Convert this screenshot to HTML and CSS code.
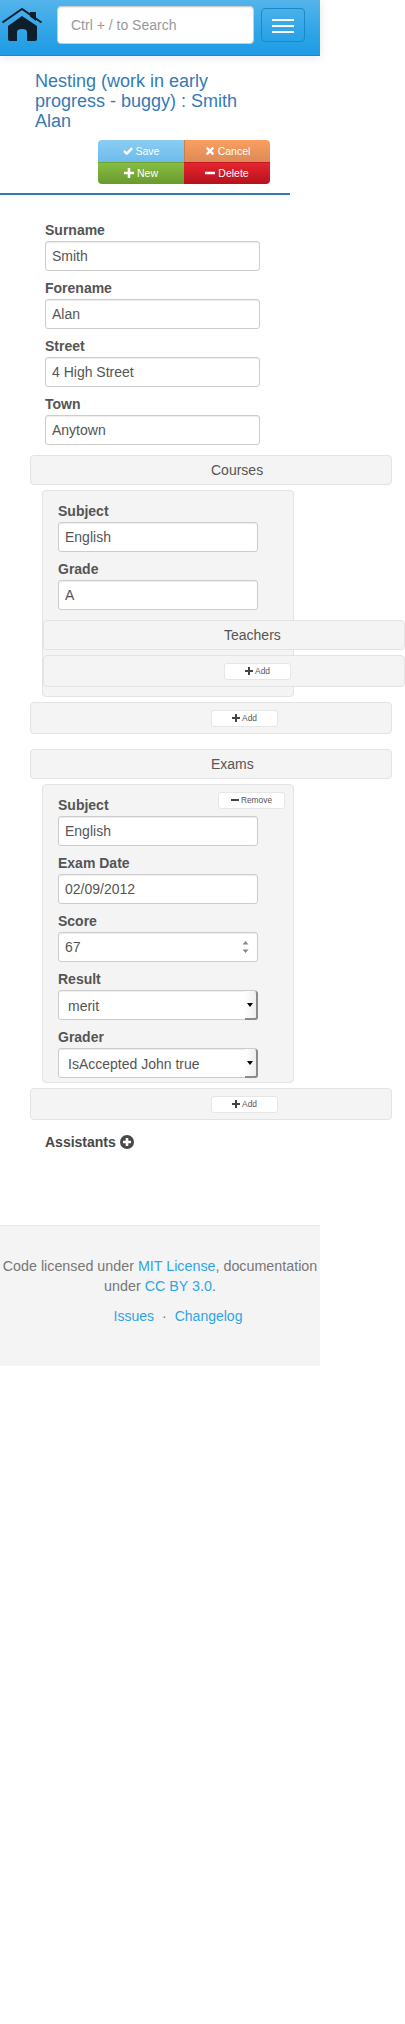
FILE: index.html
```html
<!DOCTYPE html>
<html lang="en">
<head>
<meta charset="UTF-8">
<meta name="viewport" content="width=device-width, initial-scale=1.0">
<title>Nesting</title>
<link rel="stylesheet" href="styles.css">
</head>
<body>

<svg class="icon-defs" width="0" height="0">
  <symbol id="i-plus" viewBox="0 0 12 12"><path d="M4.500 0h3v4.500H12v3H7.500V12h-3V7.500H0v-3h4.500z"/></symbol>
  <symbol id="i-minus" viewBox="0 0 12 12"><path d="M0 4.500h12v3H0z"/></symbol>
  <symbol id="i-ok" viewBox="0 0 12 12"><path d="M0 6.800l2-2 2.500 2.500L10 1.500l2 2-7.500 7.500z"/></symbol>
  <symbol id="i-remove" viewBox="0 0 12 12"><path d="M3 1l3 3 3-3 2 2-3 3 3 3-2 2-3-3-3 3-2-2 3-3-3-3z"/></symbol>
</svg>

<header class="navbar">
  <a class="brand" href="#">
    <svg viewBox="0 0 44 36" width="44" height="36">
      <path class="roof" d="M2.500 15.500L22 2l19.500 13.500" />
      <path d="M30 5h6v9l-6-4.500z"/>
      <path d="M8 19L22 9l15 10v13q0 2-2 2h-8V25q0-3-5-3t-5 3v9H10q-2 0-2-2z"/>
    </svg>
  </a>
  <input class="search" type="text" placeholder="Ctrl + / to Search">
  <button class="toggle" type="button"><span></span><span></span><span></span></button>
</header>

<main class="page">
  <h1 class="title">Nesting (work in early progress - buggy) : Smith Alan</h1>
  <div class="actions">
    <a class="act act-save" href="#"><svg class="ico"><use href="#i-ok"/></svg>Save</a>
    <a class="act act-cancel" href="#"><svg class="ico"><use href="#i-remove"/></svg>Cancel</a>
    <a class="act act-new" href="#"><svg class="ico"><use href="#i-plus"/></svg>New</a>
    <a class="act act-delete" href="#"><svg class="ico"><use href="#i-minus"/></svg>Delete</a>
  </div>
  <hr class="rule">

  <form class="main-form">
    <div class="field"><label>Surname</label><input type="text" value="Smith"></div>
    <div class="field"><label>Forename</label><input type="text" value="Alan"></div>
    <div class="field"><label>Street</label><input type="text" value="4 High Street"></div>
    <div class="field"><label>Town</label><input type="text" value="Anytown"></div>

    <div class="bar bar-title">Courses</div>
    <div class="item">
      <div class="field"><label>Subject</label><input type="text" value="English"></div>
      <div class="field"><label>Grade</label><input type="text" value="A"></div>
      <div class="bar bar-title bar-nested">Teachers</div>
      <div class="bar bar-add bar-nested"><a class="mini" href="#"><svg class="ico"><use href="#i-plus"/></svg>Add</a></div>
    </div>
    <div class="bar bar-add"><a class="mini" href="#"><svg class="ico"><use href="#i-plus"/></svg>Add</a></div>

    <div class="bar bar-title bar-exams">Exams</div>
    <div class="item item-exam">
      <a class="mini mini-remove" href="#"><svg class="ico"><use href="#i-minus"/></svg>Remove</a>
      <div class="field"><label>Subject</label><input type="text" value="English"></div>
      <div class="field"><label>Exam Date</label><input type="text" value="02/09/2012"></div>
      <div class="field">
        <label>Score</label>
        <div class="control">
          <input class="number" type="number" value="67">
          <svg class="spin" width="7" height="12" viewBox="0 0 7 12"><path d="M3.500 0L6.500 3.500H.5zM.5 8.500h6L3.500 12z"/></svg>
        </div>
      </div>
      <div class="field">
        <label>Result</label>
        <div class="control">
          <select><option>merit</option></select>
          <span class="caret-box"></span>
        </div>
      </div>
      <div class="field">
        <label>Grader</label>
        <div class="control">
          <select><option>IsAccepted John true</option></select>
          <span class="caret-box"></span>
        </div>
      </div>
    </div>
    <div class="bar bar-add"><a class="mini" href="#"><svg class="ico"><use href="#i-plus"/></svg>Add</a></div>

    <div class="assistants">
      Assistants
      <svg width="14" height="14" viewBox="0 0 14 14"><circle cx="7" cy="7" r="7"/><path class="cross" d="M5.700 3h2.600v2.700H11v2.600H8.300V11H5.700V8.300H3V5.700h2.700z"/></svg>
    </div>
  </form>
</main>

<footer class="footer">
  <p class="license">Code licensed under <a href="#">MIT License</a>, documentation under <a href="#">CC BY 3.0</a>.</p>
  <p class="links"><a href="#">Issues</a><span class="dot">·</span><a href="#">Changelog</a></p>
</footer>

</body>
</html>
```

FILE: styles.css
```css
body {
  margin: 0;
  background: #fff;
  color: #555;
  font-family: "Liberation Sans", Arial, sans-serif;
  font-size: 14px;
  line-height: 20px;
}
a {
  text-decoration: none;
}
.icon-defs {
  display: block;
}
.ico {
  width: 10px;
  height: 10px;
  fill: currentColor;
  margin-right: 4px;
  vertical-align: -1px;
}

/* top bar */
.navbar {
  width: 320px;
  height: 56px;
  box-sizing: border-box;
  display: flex;
  align-items: flex-start;
  background: linear-gradient(#54b4eb, #2fa4e7 60%, #1d9ce5);
  border-bottom: 1px solid #178acc;
  box-shadow: 0 1px 10px rgba(0, 0, 0, 0.1);
}
.brand {
  width: 44px;
  height: 36px;
  margin: 7px 13px 0 0;
  fill: #0d1f2d;
}
.brand .roof {
  fill: none;
  stroke: #0d1f2d;
  stroke-width: 2;
}
.search {
  width: 197px;
  height: 38px;
  box-sizing: border-box;
  margin-top: 6px;
  padding: 0 13px;
  border: 1px solid #ccc;
  border-radius: 4px;
  font: 14px "Liberation Sans", Arial, sans-serif;
  box-shadow: inset 0 1px 1px rgba(0, 0, 0, 0.075);
}
.search::placeholder {
  color: #999;
  opacity: 1;
}
.toggle {
  width: 44px;
  height: 34px;
  box-sizing: border-box;
  margin: 8px 0 0 7px;
  padding: 2px 0 0;
  display: flex;
  flex-direction: column;
  align-items: center;
  justify-content: center;
  gap: 4px;
  background: transparent;
  border: 1px solid #178acc;
  border-radius: 4px;
}
.toggle span {
  width: 22px;
  height: 2px;
  background: #fff;
}

/* heading and action buttons */
.page {
  width: 405px;
}
.title {
  width: 236px;
  margin: 15px 0 0 35px;
  color: #337ab7;
  font-size: 18px;
  font-weight: 400;
  line-height: 20px;
}
.actions {
  width: 172px;
  margin: 9px 0 0 98px;
  display: grid;
  grid-template-columns: 86px 86px;
  border-radius: 4px;
  overflow: hidden;
}
.act {
  display: block;
  height: 22px;
  text-align: center;
  color: #fff;
  font-size: 10.5px;
  line-height: 23px;
}
.act .ico {
  margin-right: 3px;
}
.act-save {
  background: linear-gradient(#8acdf3, #6cbcec);
}
.act-cancel {
  background: linear-gradient(#fb9f5f, #dc8a58);
  border-left: 1px solid #c9804f;
}
.act-new {
  box-sizing: border-box;
  background: linear-gradient(#87bd43, #689a2e);
  border-top: 1px solid #6fa335;
  line-height: 20px;
}
.act-delete {
  box-sizing: border-box;
  background: linear-gradient(#e6252f, #b5121b);
  border-top: 1px solid #c2181f;
  line-height: 20px;
}
.rule {
  width: 290px;
  height: 2px;
  margin: 9px 0 0;
  border: 0;
  background: #337ab7;
}

/* form */
.main-form {
  padding-top: 26px;
}
.field {
  width: 215px;
  margin: 0 0 8px 45px;
}
.field label {
  display: block;
  height: 20px;
  font-weight: 700;
  line-height: 18px;
}
.field input,
.field select {
  display: block;
  width: 100%;
  height: 30px;
  box-sizing: border-box;
  padding: 0 6px;
  background: #fff;
  color: #555;
  border: 1px solid #ccc;
  border-radius: 3px;
  font: 14px "Liberation Sans", Arial, sans-serif;
  box-shadow: inset 0 1px 1px rgba(0, 0, 0, 0.075);
}
.field select {
  appearance: none;
  padding: 1px 0 0 9px;
}
.field .number {
  appearance: textfield;
}
.control {
  position: relative;
}
.spin {
  position: absolute;
  top: 9px;
  right: 9px;
  fill: #888;
}
.caret-box {
  position: absolute;
  top: 1px;
  right: 0;
  width: 13px;
  height: 29px;
  box-sizing: border-box;
  background: linear-gradient(90deg, #fff, #eee);
  border-right: 2px solid #8a8a8a;
  border-bottom: 2px solid #8a8a8a;
  border-radius: 0 3px 3px 0;
}
.caret-box::after {
  content: "";
  position: absolute;
  top: 12px;
  left: 2px;
  border-left: 3px solid transparent;
  border-right: 3px solid transparent;
  border-top: 4px solid #000;
}
.bar {
  width: 362px;
  box-sizing: border-box;
  margin-left: 30px;
  padding-left: 180px;
  background: #f4f4f4;
  border: 1px solid #e3e3e3;
  border-radius: 4px;
}
.bar-title {
  height: 30px;
  margin-top: 10px;
  line-height: 28px;
}
.bar-add {
  height: 32px;
  margin-top: 5px;
  padding-top: 7px;
}
.bar-exams {
  margin-top: 15px;
}
.item {
  position: relative;
  width: 252px;
  box-sizing: border-box;
  margin: 5px 0 0 42px;
  padding: 11px 0 9px;
  background: #f4f4f4;
  border: 1px solid #e3e3e3;
  border-radius: 4px;
}
.item .field {
  width: 200px;
  margin-left: 15px;
}
.item-exam {
  padding-bottom: 4px;
}
.item-exam .field:last-child {
  margin-bottom: 0;
}
.bar-nested {
  margin-left: 0;
}
.mini {
  display: block;
  width: 67px;
  height: 17px;
  box-sizing: border-box;
  text-align: center;
  color: #555;
  background: #fff;
  border: 1px solid #e6e6e6;
  border-radius: 3px;
  font-size: 8.400px;
  line-height: 15px;
}
.mini .ico {
  width: 8px;
  height: 8px;
  margin-right: 2px;
  fill: #444;
}
.mini-remove {
  position: absolute;
  top: 7px;
  right: 8px;
}
.assistants {
  margin: 12px 0 0 45px;
  font-weight: 700;
  color: #484848;
}
.assistants svg {
  fill: #484848;
  vertical-align: -2px;
}
.assistants .cross {
  fill: #fff;
}

/* footer */
.footer {
  width: 320px;
  height: 141px;
  box-sizing: border-box;
  margin-top: 73px;
  padding-top: 30px;
  background: #f4f4f4;
  border-top: 1px solid #e5e5e5;
  color: #777;
  text-align: center;
}
.footer p {
  margin: 0 0 10px;
}
.footer a {
  color: #2fa4e7;
}
.license {
  font-size: 14.300px;
}
.links {
  padding-left: 36px;
}
.dot {
  margin: 0 8px;
}
```
